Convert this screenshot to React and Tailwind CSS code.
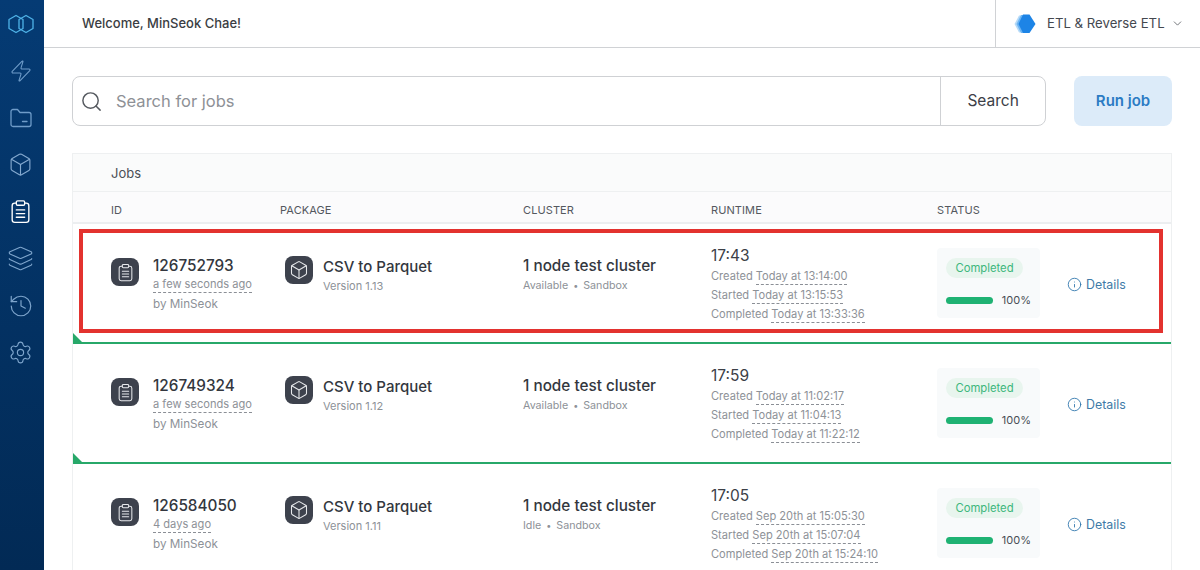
import React from 'react';
import { Zap, Box, Layers, History, Settings, Search, ChevronDown, Info } from 'lucide-react';

const jobs = [
  {
    id: '126752793',
    ago: 'a few seconds ago',
    version: 'Version 1.13',
    state: 'Available',
    runtime: '17:43',
    created: 'Today at 13:14:00',
    started: 'Today at 13:15:53',
    completed: 'Today at 13:33:36',
  },
  {
    id: '126749324',
    ago: 'a few seconds ago',
    version: 'Version 1.12',
    state: 'Available',
    runtime: '17:59',
    created: 'Today at 11:02:17',
    started: 'Today at 11:04:13',
    completed: 'Today at 11:22:12',
  },
  {
    id: '126584050',
    ago: '4 days ago',
    version: 'Version 1.11',
    state: 'Idle',
    runtime: '17:05',
    created: 'Sep 20th at 15:05:30',
    started: 'Sep 20th at 15:07:04',
    completed: 'Sep 20th at 15:24:10',
  },
];

function Logo() {
  return (
    <svg width="28" height="20" viewBox="0 0 28 20" fill="none" stroke="#4fb3e8" strokeWidth="1.3" strokeLinejoin="round">
      <path d="M9 1.500 16 5.500V14.500L9 18.500 2 14.500V5.500Z" />
      <path d="M19 1.500 26 5.500V14.500L19 18.500 12 14.500V5.500Z" />
    </svg>
  );
}

function FolderIcon() {
  return (
    <svg width="22" height="20" viewBox="0 0 22 20" fill="none" stroke="#6f9cc9" strokeWidth="1.3" strokeLinecap="round" strokeLinejoin="round">
      <path d="M1 3.500C1 2.400 1.900 1.500 3 1.500H7.500L10 4.500H19C20.100 4.500 21 5.400 21 6.500V16.500C21 17.600 20.100 18.500 19 18.500H3C1.900 18.500 1 17.600 1 16.500Z" />
      <path d="M12.500 13.500H17" />
    </svg>
  );
}

// clipboard with three full-width bars, lucide's one has dots
function ClipboardBars({ size = 24, color = '#fff', strokeWidth = 1.500 }) {
  return (
    <svg width={size} height={size} viewBox="0 0 24 24" fill="none" stroke={color} strokeWidth={strokeWidth} strokeLinecap="round" strokeLinejoin="round">
      <path d="M8 4H6.500C5.100 4 4 5.100 4 6.500V20c0 1.400 1.100 2.500 2.500 2.500h11c1.400 0 2.500-1.100 2.500-2.500V6.500C20 5.100 18.900 4 17.500 4H16" />
      <rect x="8" y="1.800" width="8" height="4.200" rx="1.200" />
      <path d="M8 10.500h8M8 14h8M8 17.500h8" />
    </svg>
  );
}

function EnvMark() {
  return (
    <svg width="22" height="20" viewBox="0 0 22 20">
      <path d="M5 1.500 0.500 10 5 18.500h6V1.500Z" fill="#b5daf8" />
      <path d="M7 1 2.500 10 7 19h4V1Z" fill="#6db5f3" />
      <path d="M9 0.500h6.500L21.500 10l-6 9H9L4.500 10Z" fill="#1d84e6" />
    </svg>
  );
}

function Dashed({ children }) {
  return <span className="border-b border-dashed border-[#8b8f96] pb-px">{children}</span>;
}

function TimeLine({ label, value }) {
  return (
    <div className="h-[19px] text-[11.100px] leading-[19px] text-[#8d9197]">
      {label} <Dashed>{value}</Dashed>
    </div>
  );
}

function JobRow({ job, marked }) {
  return (
    <div className="relative flex h-[120px] border-b-2 border-[#27a869] pl-[38px]">
      <div className="flex w-[169px] pt-[34px]">
        <div className="flex h-7 w-7 shrink-0 items-center justify-center rounded-lg bg-[#3d424d]">
          <ClipboardBars size={19} color="#e6e8eb" strokeWidth={1.300} />
        </div>
        <div className="ml-[14px] -mt-[3px]">
          <div className="text-[15.300px] font-medium leading-[21px] text-[#33373e]">{job.id}</div>
          <div className="h-[19px] text-[11.100px] leading-[17px] text-[#8d9197]">
            <Dashed>{job.ago}</Dashed>
          </div>
          <div className="text-[11.700px] leading-[19px] text-[#8d9197]">by MinSeok</div>
        </div>
      </div>
      <div className="flex w-[243px] pl-[5px] pt-[32px]">
        <div className="flex h-7 w-7 shrink-0 items-center justify-center rounded-lg bg-[#3d424d]">
          <Box size={20} strokeWidth={1.300} color="#e6e8eb" />
        </div>
        <div className="ml-[10px]">
          <div className="text-[15px] font-medium leading-[22px] text-[#33373e]">CSV to Parquet</div>
          <div className="text-[11px] leading-[16px] text-[#8d9197]">{job.version}</div>
        </div>
      </div>
      <div className="w-[188px] pt-[31px]">
        <div className="text-[15.300px] font-medium leading-[22px] text-[#33373e]">1 node test cluster</div>
        <div className="mt-px text-[10.700px] leading-[16px] text-[#8d9197]">
          {job.state} <span className="mx-[2px] text-[9px]">•</span> Sandbox
        </div>
      </div>
      <div className="w-[226px] pt-[21px]">
        <div className="text-[15.500px] leading-[22px] text-[#3c4047]">{job.runtime}</div>
        <TimeLine label="Created" value={job.created} />
        <TimeLine label="Started" value={job.started} />
        <TimeLine label="Completed" value={job.completed} />
      </div>
      <div className="w-[131px] pt-[24px]">
        <div className="h-[70px] w-[103px] rounded bg-[#f8fafb] px-[9px] pt-[10px]">
          <div className="flex h-5 w-[77px] items-center justify-center rounded-full bg-[#e8f5ee] text-[11.300px] text-[#3db77c]">
            Completed
          </div>
          <div className="mt-[14px] flex items-center">
            <div className="h-[7px] w-[47px] rounded-full bg-[#1fb273]" />
            <span className="ml-[9px] text-[11px] text-[#4a4e55]">100%</span>
          </div>
        </div>
      </div>
      <div className="-ml-px flex items-start pt-[52px] text-[12.400px] leading-[17px] text-[#3f7ba8]">
        <Info size={15} strokeWidth={1.400} color="#2f76ad" className="mt-px" />
        <span className="ml-[4px]">Details</span>
      </div>
      {/* little green corner sitting on the bottom line */}
      <div className="absolute bottom-0 left-0 h-0 w-0 border-b-[9px] border-r-[9px] border-b-[#27a869] border-r-transparent" />
      {marked && (
        <div className="absolute left-[6px] top-[5px] h-[104px] w-[1084px] border-4 border-[#e3322f]" />
      )}
    </div>
  );
}

export default function App() {
  const navItems = [
    { key: 'zap', el: <Zap size={24} strokeWidth={1.100} color="#6f9cc9" /> },
    { key: 'folder', el: <FolderIcon /> },
    { key: 'box', el: <Box size={25} strokeWidth={1.100} color="#84a9cf" /> },
    { key: 'jobs', el: <ClipboardBars size={25} color="#ffffff" strokeWidth={1.300} /> },
    { key: 'layers', el: <Layers size={27} strokeWidth={1} color="#7ea5cc" /> },
    { key: 'history', el: <History size={26} strokeWidth={1.100} color="#7ea5cc" /> },
    { key: 'settings', el: <Settings size={25} strokeWidth={1.100} color="#7ea5cc" /> },
  ];

  return (
    <div className="flex h-[570px] w-[1200px] overflow-hidden bg-white font-['Inter',sans-serif]">
      <aside className="flex w-[44px] shrink-0 flex-col items-center bg-gradient-to-b from-[#053b74] to-[#022a55] pr-[3px]">
        <div className="flex h-[47px] items-center">
          <Logo />
        </div>
        <div className="flex w-full flex-col items-center">
          {navItems.map((item) => (
            <div key={item.key} className="flex h-[47px] w-full items-center justify-center">
              {item.el}
            </div>
          ))}
        </div>
      </aside>

      <main className="min-w-0 flex-1">
        <header className="flex h-[48px] items-center border-b border-[#d0d2d5]">
          <div className="flex-1 pl-[38px] text-[13px] font-medium text-[#3a3d42]">Welcome, MinSeok Chae!</div>
          <div className="flex h-full w-[205px] items-center border-l border-[#d0d2d5] pl-[18px]">
            <EnvMark />
            <span className="ml-[11px] text-[13.200px] text-[#44484f]">ETL &amp; Reverse ETL</span>
            <ChevronDown size={13} strokeWidth={1.500} color="#55595f" className="ml-[6px]" />
          </div>
        </header>

        <div className="pl-[28px] pr-[28px]">
          <div className="mt-[28px] flex items-stretch">
            <div className="flex h-[50px] w-[975px] items-center rounded-lg border border-[#cfd1d4]">
              <Search size={23} strokeWidth={1.500} color="#55595f" className="ml-[7px]" />
              <div className="ml-[13px] flex-1 text-[16.500px] text-[#8e9196]">Search for jobs</div>
              <div className="flex h-full w-[105px] items-center justify-center border-l border-[#cfd1d4] text-[15.500px] text-[#3c4047]">
                Search
              </div>
            </div>
            <div className="ml-[28px] flex h-[50px] w-[98px] items-center justify-center rounded-lg bg-[#dcebf9] text-[15px] font-semibold text-[#2b7bc4]">
              Run job
            </div>
          </div>

          <section className="mt-[27px] w-[1100px] border-l border-r border-[#eef0f1]">
            <div className="flex h-[39px] items-center border-b border-t border-[#eef0f1] bg-[#fafbfb] pl-[38px] pt-[2px] text-[13px] text-[#4b4f55]">
              Jobs
            </div>
            <div className="flex h-[32px] items-center border-b-2 border-[#eceef0] bg-[#fbfbfc] pl-[38px] pt-[6px] text-[11px] tracking-[0.1px] text-[#54585e]">
              <div className="w-[169px]">ID</div>
              <div className="w-[243px]">PACKAGE</div>
              <div className="w-[188px]">CLUSTER</div>
              <div className="w-[226px]">RUNTIME</div>
              <div>STATUS</div>
            </div>
            {jobs.map((job, i) => (
              <JobRow key={job.id} job={job} marked={i === 0} />
            ))}
          </section>
        </div>
      </main>
    </div>
  );
}
